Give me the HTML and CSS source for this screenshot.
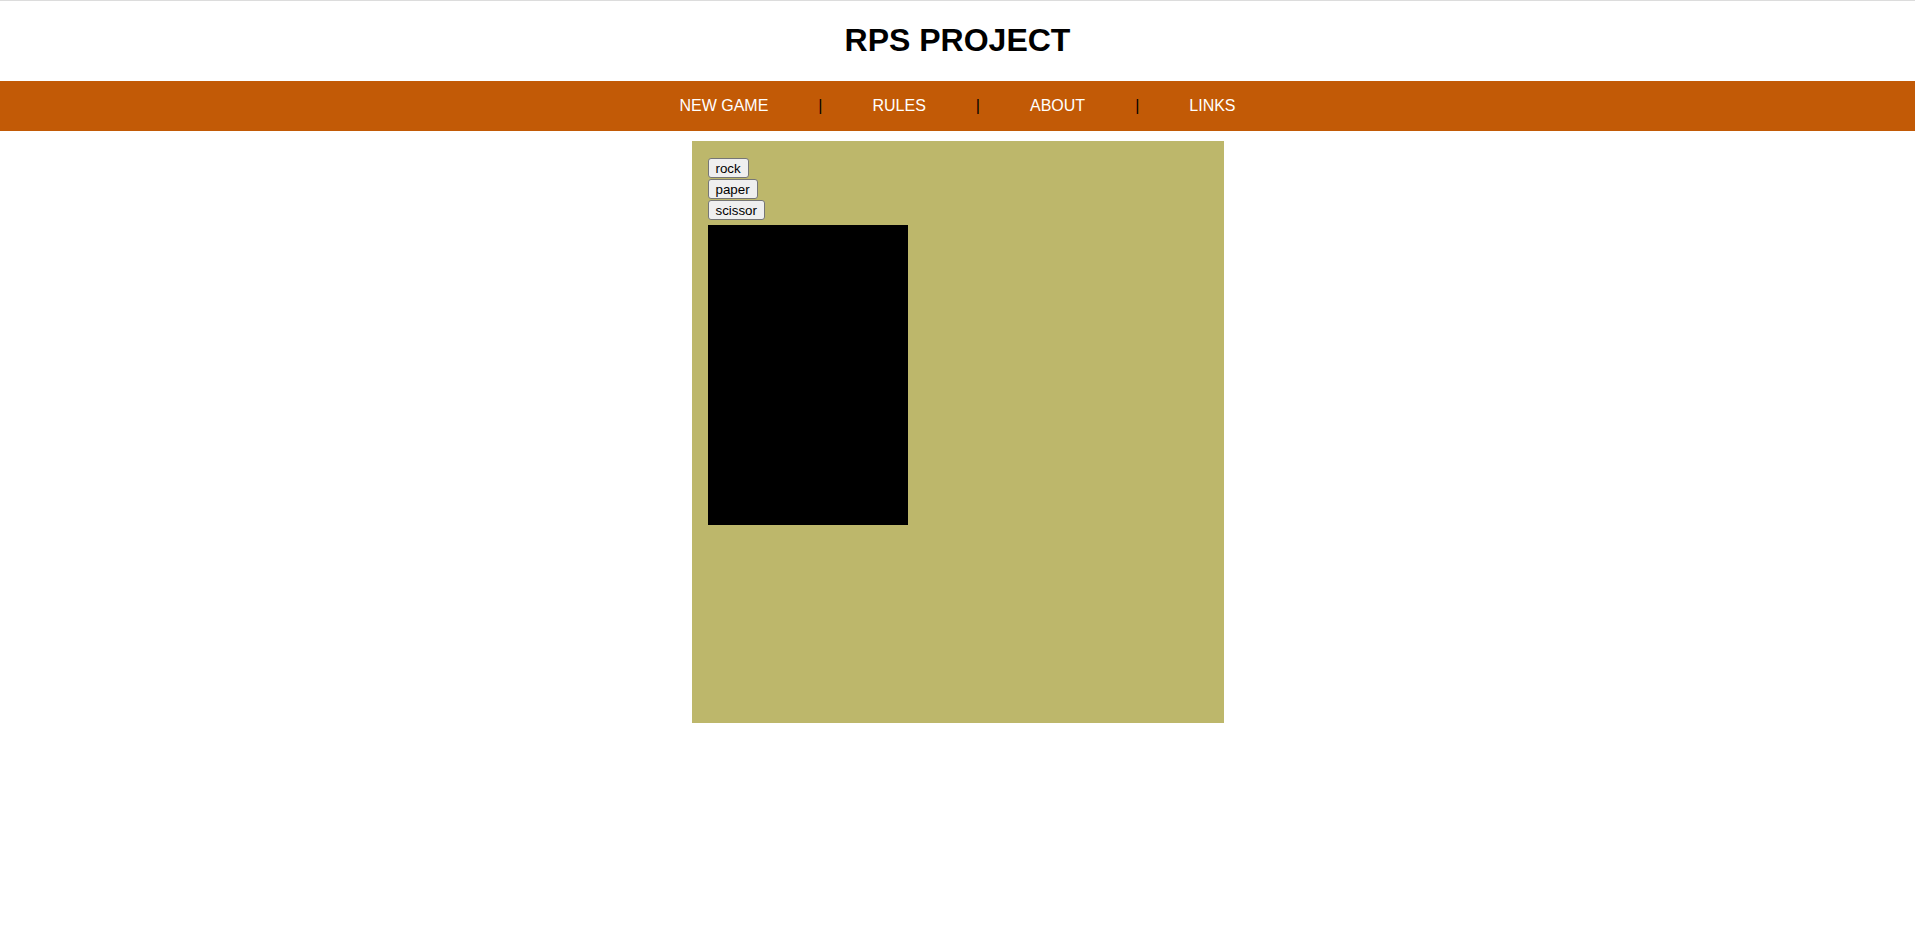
FILE: index.html
```html
<!DOCTYPE html>
<html lang="en">
<head>
<meta charset="utf-8">
<title>RPS PROJECT</title>
<link rel="stylesheet" href="styles.css">
</head>
<body>
<header class="site-header">
  <h1 class="site-title">RPS PROJECT</h1>
</header>
<nav class="main-nav">
  <a class="nav-link" href="#">NEW GAME</a>
  <span class="nav-sep">|</span>
  <a class="nav-link" href="#">RULES</a>
  <span class="nav-sep">|</span>
  <a class="nav-link" href="#">ABOUT</a>
  <span class="nav-sep">|</span>
  <a class="nav-link" href="#">LINKS</a>
</nav>
<main class="game">
  <div class="controls">
    <button class="choice" type="button">rock</button>
    <button class="choice" type="button">paper</button>
    <button class="choice" type="button">scissor</button>
  </div>
  <div class="screen"></div>
</main>
</body>
</html>
```
FILE: styles.css
```css
html, body {
  margin: 0;
  padding: 0;
  background: #ffffff;
  font-family: "Liberation Sans", Arial, sans-serif;
}

.site-header {
  border-top: 1px solid #dcdcdc;
  text-align: center;
}

.site-title {
  margin: 21px 0 22px;
  font-size: 32px;
  font-weight: bold;
  color: #000;
  line-height: 37px;
}

.main-nav {
  height: 50px;
  background: #c25a06;
  display: flex;
  justify-content: center;
  align-items: center;
  gap: 50px;
  font-size: 16px;
}

.nav-link {
  color: #ffffff;
  text-decoration: none;
}

.nav-sep {
  color: #000000;
}

.game {
  width: 500px;
  height: 550px;
  padding: 16px;
  margin: 10px auto 0;
  background: #bdb76b;
}

.controls {
  display: flex;
  flex-direction: column;
  align-items: flex-start;
  padding-top: 1px;
}

.choice {
  font-family: "Liberation Sans", Arial, sans-serif;
  font-size: 13.333px;
  color: #000;
  background: #efefef;
  border: 1px solid #767676;
  border-radius: 3px;
  padding: 1px 7px;
  height: 20px;
  line-height: 15px;
  margin-bottom: 1px;
}

.screen {
  width: 200px;
  height: 300px;
  margin-top: 4px;
  background: #000000;
}
```
